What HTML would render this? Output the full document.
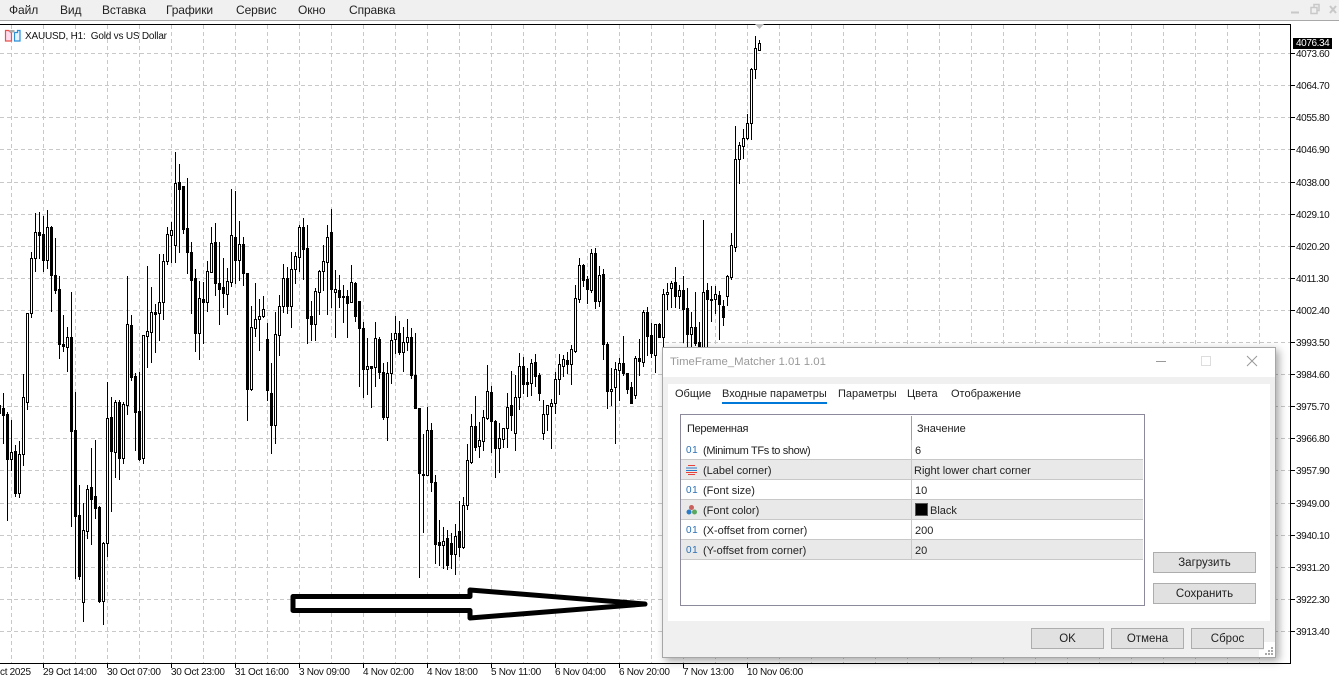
<!DOCTYPE html>
<html><head><meta charset="utf-8"><style>
html,body{margin:0;padding:0;background:#fff}
#p{position:relative;width:1339px;height:682px;overflow:hidden;background:#fff;font-family:"Liberation Sans",sans-serif;color:#111}
#p span,#p div{position:absolute;white-space:pre}
.m{font-size:12px;top:3px;color:#222;letter-spacing:-.1px}
.a{font-size:10px;letter-spacing:-.4px;left:1296px;color:#111;line-height:12px;margin-top:1.500px}
.t{font-size:10px;letter-spacing:-.3px;top:667px;color:#111;line-height:12px}
.d{font-size:11px;color:#222;line-height:14px;margin-top:1px}
.b{background:#e1e1e1;border:1px solid #adadad;box-sizing:border-box;text-align:center;font-size:11.5px;line-height:20px;color:#222}
.r{left:681px;width:462px;height:19px;border-bottom:1px solid #c8c8c8}
.o{font-size:10px;color:#2b6fb5;left:686px;letter-spacing:.6px;line-height:12px;margin-top:1px}
</style></head><body><div id="p">
<div style="left:0;top:0;width:1339px;height:20px;background:#f0f0f0"></div>
<div style="left:0;top:20px;width:1339px;height:1px;background:#a8a8a8"></div>
<span class="m" style="left:9px">Файл</span><span class="m" style="left:60px">Вид</span><span class="m" style="left:102px">Вставка</span><span class="m" style="left:166px">Графики</span><span class="m" style="left:236px">Сервис</span><span class="m" style="left:298px">Окно</span><span class="m" style="left:349px">Справка</span>
<svg style="position:absolute;left:1285px;top:0" width="54" height="20" fill="none" stroke="#c8c8c8"><path d="M6 12.500H14" stroke-width="2"/><path d="M26 7.500h6v6h-6zM29 7V4.500h5v6h-2" stroke-width="1.500"/><path d="M45 6l6 7M51 6l-6 7" stroke-width="2"/></svg>
<svg id="c" style="position:absolute;left:0;top:0" width="1339" height="682"></svg>
<svg style="position:absolute;left:4px;top:29px" width="18" height="13" fill="none"><path d="M1.500 1.500h3l3 2.500v8h-6z" stroke="#e8524a" stroke-width="1.200" fill="#fde"/><path d="M10.500 3.500h3v-2h2.500v10.500h-5.500z" stroke="#2b8fd8" stroke-width="1.200" fill="#e6f4ff"/><rect x="5.500" y="1" width="5" height="2.500" fill="#aaa"/></svg>
<span style="left:25px;top:31px;font-size:10px;line-height:12px;letter-spacing:-.2px;color:#111">XAUUSD, H1:  Gold vs US Dollar</span>
<span class="a" style="top:47px">4073.60</span><span class="a" style="top:79px">4064.70</span><span class="a" style="top:111px">4055.80</span><span class="a" style="top:143px">4046.90</span><span class="a" style="top:176px">4038.00</span><span class="a" style="top:208px">4029.10</span><span class="a" style="top:240px">4020.20</span><span class="a" style="top:272px">4011.30</span><span class="a" style="top:304px">4002.40</span><span class="a" style="top:336px">3993.50</span><span class="a" style="top:368px">3984.60</span><span class="a" style="top:400px">3975.70</span><span class="a" style="top:432px">3966.80</span><span class="a" style="top:464px">3957.90</span><span class="a" style="top:497px">3949.00</span><span class="a" style="top:529px">3940.10</span><span class="a" style="top:561px">3931.20</span><span class="a" style="top:593px">3922.30</span><span class="a" style="top:625px">3913.40</span>
<div style="left:1293px;top:38px;width:39px;height:11px;background:#000"></div>
<span class="a" style="top:36.500px;color:#fff">4076.34</span>
<span class="t" style="left:0">ct 2025</span><span class="t" style="left:43px">29 Oct 14:00</span><span class="t" style="left:107px">30 Oct 07:00</span><span class="t" style="left:171px">30 Oct 23:00</span><span class="t" style="left:235px">31 Oct 16:00</span><span class="t" style="left:299px">3 Nov 09:00</span><span class="t" style="left:363px">4 Nov 02:00</span><span class="t" style="left:427px">4 Nov 18:00</span><span class="t" style="left:491px">5 Nov 11:00</span><span class="t" style="left:555px">6 Nov 04:00</span><span class="t" style="left:619px">6 Nov 20:00</span><span class="t" style="left:683px">7 Nov 13:00</span><span class="t" style="left:747px">10 Nov 06:00</span>

<div style="left:662px;top:347px;width:614px;height:311px;background:#f0f0f0;box-sizing:border-box;border:1px solid #a6a6a6;box-shadow:3px 3px 8px rgba(0,0,0,.35)"></div>
<div style="left:663px;top:348px;width:612px;height:29px;background:#fff"></div>
<div style="left:668px;top:384px;width:602px;height:237px;background:#fff"></div>
<span style="left:670px;top:355px;font-size:11.400px;line-height:14px;color:#999">TimeFrame_Matcher 1.01 1.01</span>
<svg style="position:absolute;left:1150px;top:350px" width="115" height="22" fill="none"><path d="M6 11.500H16" stroke="#999"/><path d="M51.500 6.500h9v9h-9z" stroke="#ddd"/><path d="M97 6l10 10M107 6l-10 10" stroke="#999"/></svg>
<span class="d" style="left:675px;top:386px">Общие</span><span class="d" style="left:722px;top:386px">Входные параметры</span><span class="d" style="left:838px;top:386px">Параметры</span><span class="d" style="left:907px;top:386px">Цвета</span><span class="d" style="left:951px;top:386px">Отображение</span>
<div style="left:722px;top:402px;width:105px;height:2px;background:#0078d7"></div>

<div style="left:680px;top:414px;width:465px;height:192px;box-sizing:border-box;border:1px solid #8a8a9c;background:#fff"></div>
<div class="r" style="top:440px"></div>
<div class="r" style="top:460px;background:#e9e9e9"></div>
<div class="r" style="top:480px"></div>
<div class="r" style="top:500px;background:#e9e9e9"></div>
<div class="r" style="top:520px"></div>
<div class="r" style="top:540px;background:#e9e9e9"></div>
<div style="left:911px;top:416px;width:1px;height:24px;background:#a0a0a0"></div>
<div style="left:911px;top:440px;width:1px;height:120px;background:#c8c8c8"></div>
<span class="d" style="left:687px;top:421px;letter-spacing:-.3px">Переменная</span><span class="d" style="left:917px;top:421px">Значение</span>

<span class="o" style="top:444px">01</span><span class="d" style="left:703px;top:443px;letter-spacing:-.35px">(Minimum TFs to show)</span><span class="d" style="left:915px;top:443px">6</span>
<svg style="position:absolute;left:685px;top:464px" width="13" height="12"><path d="M3 1.500h7M3 10.500h7" stroke="#e8413c"/><path d="M1 4h11M1 6.500h11" stroke="#2b7cc8"/><path d="M1 8.500h11" stroke="#e8413c"/></svg>
<span class="d" style="left:703px;top:463px">(Label corner)</span><span class="d" style="left:914px;top:463px">Right lower chart corner</span>
<span class="o" style="top:484px">01</span><span class="d" style="left:703px;top:483px">(Font size)</span><span class="d" style="left:915px;top:483px">10</span>
<svg style="position:absolute;left:686px;top:504px" width="12" height="12"><circle cx="5.500" cy="3.500" r="2.500" fill="#c9605c"/><circle cx="3" cy="8" r="2.500" fill="#2b7cc8"/><circle cx="8.500" cy="8" r="2.500" fill="#5aa860"/></svg>
<span class="d" style="left:703px;top:503px">(Font color)</span>
<div style="left:915px;top:503px;width:13px;height:13px;background:#000;box-sizing:border-box;border:1px solid #555"></div>
<span class="d" style="left:930px;top:503px">Black</span>
<span class="o" style="top:524px">01</span><span class="d" style="left:703px;top:523px">(X-offset from corner)</span><span class="d" style="left:915px;top:523px">200</span>
<span class="o" style="top:544px">01</span><span class="d" style="left:703px;top:543px">(Y-offset from corner)</span><span class="d" style="left:915px;top:543px">20</span>

<div class="b" style="left:1153px;top:552px;width:103px;height:21px">Загрузить</div>
<div class="b" style="left:1153px;top:583px;width:103px;height:21px">Сохранить</div>
<div class="b" style="left:1031px;top:628px;width:73px;height:21px">OK</div>
<div class="b" style="left:1111px;top:628px;width:73px;height:21px">Отмена</div>
<div class="b" style="left:1191px;top:628px;width:73px;height:21px">Сброс</div>
<div style="left:1264px;top:642px;width:11px;height:15px;background:#fff"></div>
<div style="left:1259px;top:650px;width:16px;height:7px;background:#fff"></div>
<svg style="position:absolute;left:1264px;top:646px" width="10" height="10" fill="#aaa"><rect x="7" y="1" width="2" height="2"/><rect x="4" y="4" width="2" height="2"/><rect x="7" y="4" width="2" height="2"/><rect x="1" y="7" width="2" height="2"/><rect x="4" y="7" width="2" height="2"/><rect x="7" y="7" width="2" height="2"/></svg>
</div>
<script>
var D=[[-1,400,405,413,440,1],[3,393,408,415,443,1],[7,412,414,459,520,1],[11,420,452,459,470,0],[15,445,451,493,496,1],[19,441,454,493,497,0],[23,374,397,454,465,0],[27,313,313,402,409,0],[31,252,258,313,317,0],[35,213,232,258,271,0],[39,212,232,235,258,1],[43,216,234,260,271,1],[47,210,227,260,268,0],[51,226,227,275,311,1],[55,238,275,290,293,1],[59,276,289,344,358,1],[63,315,344,346,351,1],[67,327,337,347,371,0],[71,292,337,431,526,1],[75,392,430,516,578,1],[79,485,515,576,579,1],[83,503,530,602,621,0],[87,485,489,531,538,0],[91,448,487,499,544,1],[95,440,496,508,518,1],[99,506,507,601,602,1],[103,542,543,601,624,0],[107,382,418,543,556,0],[111,397,417,451,511,1],[115,400,402,452,477,0],[119,400,402,458,479,1],[123,402,404,458,463,0],[127,276,324,405,414,0],[131,315,325,377,380,1],[135,373,376,412,450,1],[139,372,411,459,460,1],[143,335,335,458,463,0],[147,266,331,336,367,0],[151,287,312,332,362,0],[155,304,312,314,352,1],[159,254,302,313,340,0],[163,254,261,302,319,0],[167,227,234,261,264,0],[171,222,230,235,262,0],[175,152,183,245,262,0],[179,164,182,189,252,1],[183,186,186,229,233,1],[187,178,228,252,273,1],[191,242,252,280,313,1],[195,269,278,333,351,1],[199,281,298,333,359,0],[203,282,299,302,343,1],[207,261,271,302,311,0],[211,227,243,272,272,0],[215,223,242,283,295,1],[219,242,283,289,324,1],[223,258,287,293,307,1],[227,268,281,294,314,0],[231,189,235,282,286,0],[235,191,237,260,283,1],[239,221,244,260,280,0],[243,237,244,273,285,1],[247,273,273,389,420,1],[251,306,327,389,390,0],[255,283,319,328,336,0],[259,299,316,319,350,0],[263,296,309,316,317,0],[267,323,339,390,400,1],[271,363,393,425,453,1],[275,312,334,425,443,0],[279,295,306,335,355,0],[283,264,278,306,312,0],[287,267,278,306,313,1],[291,252,269,306,327,0],[295,252,256,269,283,0],[299,225,227,257,271,0],[303,218,227,249,279,1],[307,225,248,318,343,1],[311,301,316,324,340,1],[315,288,291,324,340,0],[319,270,271,292,314,0],[323,245,261,271,290,0],[327,225,237,262,314,0],[331,209,232,289,307,1],[335,270,289,292,337,0],[339,275,290,297,307,1],[343,285,296,297,322,1],[347,290,296,303,337,1],[351,265,282,302,302,0],[355,282,283,316,321,1],[359,301,301,328,386,1],[363,322,328,369,397,1],[367,338,366,369,394,0],[371,366,366,368,407,1],[375,322,338,367,386,0],[379,337,339,372,378,1],[383,363,372,417,419,1],[387,362,373,417,440,0],[391,333,340,373,383,0],[395,316,333,339,353,0],[399,321,333,352,354,1],[403,327,342,352,371,0],[407,319,337,342,350,0],[411,328,337,375,378,1],[415,333,375,408,408,1],[419,408,408,473,577,1],[423,434,474,475,532,1],[427,407,430,475,475,0],[431,423,430,482,491,1],[435,475,482,544,563,1],[439,520,542,545,565,1],[443,527,541,545,568,0],[447,530,538,565,569,1],[451,533,543,554,568,1],[455,524,536,554,574,0],[459,501,531,547,556,1],[463,497,505,547,548,0],[467,444,460,505,509,0],[471,414,426,462,463,0],[475,396,426,447,450,1],[479,422,440,446,457,0],[483,410,417,441,450,0],[487,365,391,418,419,0],[491,386,392,421,452,1],[495,420,421,448,477,1],[499,423,438,448,472,0],[503,428,428,439,447,0],[507,393,407,428,447,0],[511,371,405,415,430,1],[515,375,397,433,450,0],[519,353,366,397,409,0],[523,357,366,384,393,1],[527,368,382,384,396,1],[531,359,363,383,395,0],[535,354,362,376,386,1],[539,373,375,393,400,1],[543,400,414,433,439,0],[547,405,405,414,430,0],[551,399,403,406,448,0],[555,372,379,403,413,0],[559,354,364,379,394,0],[563,355,359,366,376,0],[567,352,360,364,373,1],[571,345,349,364,384,0],[575,285,298,351,352,0],[579,258,265,299,302,0],[583,264,265,280,286,1],[587,276,279,289,303,1],[591,249,253,290,292,0],[595,248,253,301,308,1],[599,266,275,301,306,0],[603,269,274,344,359,1],[607,342,344,391,408,1],[611,368,389,391,405,0],[615,362,369,387,443,0],[619,358,363,370,400,0],[623,336,363,373,375,1],[627,373,373,389,393,1],[631,382,387,403,403,1],[635,356,358,395,398,0],[639,339,358,361,375,1],[643,310,312,362,366,0],[647,307,312,336,355,1],[651,323,335,353,357,1],[655,324,324,355,372,0],[659,323,324,337,337,1],[663,289,294,337,347,0],[667,283,292,294,309,0],[671,281,283,288,307,0],[675,267,282,296,307,1],[679,285,290,296,308,0],[683,276,290,309,342,1],[687,288,308,334,350,1],[691,312,327,334,350,0],[695,292,327,343,345,1],[699,322,342,347,350,1],[703,220,292,347,350,0],[707,283,290,299,350,1],[711,286,299,300,321,1],[715,286,294,299,313,0],[719,291,295,304,339,1],[723,300,306,317,325,1],[727,275,276,296,305,0],[731,233,245,277,279,0],[735,126,159,247,251,0],[739,142,145,159,183,0],[743,129,138,146,158,0],[747,114,123,138,139,0],[751,68,69,123,139,0],[755,36,48,69,78,0],[759,40,43,50,50,0]];
var s='',i,y=[53,85,117,149,182,214,246,278,310,342,374,406,438,470,503,535,567,599,631];
var g='',tk='';
for(i=0;i<40;i++){var x=11+32*i;g+='M'+(x+.5)+' 25V663'}
for(i=0;i<y.length;i++){g+='M0 '+(y[i]+.5)+'H1290';tk+='M1291 '+(y[i]+.5)+'h4'}
for(i=0;i<12;i++){tk+='M'+(43+64*i+.5)+' 664v4'}
s+='<path d="'+g+'" stroke="#c8c8c8" stroke-dasharray="4 3" fill="none"/>';
var w='',h='',f='';
D.forEach(function(c){var a=c[0]+.5;w+='M'+a+' '+c[1]+'V'+(c[4]+1);
var p='M'+(c[0]-1+.5)+' '+(c[2]+.5)+'h2v'+Math.max(c[3]-c[2],1)+'h-2z';if(c[5])f+=p;else h+=p});
s+='<path d="'+w+'" stroke="#000" fill="none"/><path d="'+h+'" stroke="#000" fill="#fff"/><path d="'+f+'" stroke="#000" fill="#000"/>';
s+='<path d="M0 24.500H1291M1290.500 24V664M0 663.500H1291" stroke="#000" fill="none"/>';
s+='<path d="'+tk+'" stroke="#000" fill="none"/>';
s+='<path d="M755 24h9l-4.500 5z" fill="#bdbdbd"/>';
s+='<path d="M293 596.500H470V590L645 604 470 618V610.500H293Z" fill="#fff" stroke="#000" stroke-width="5" stroke-linejoin="round"/>';
document.getElementById('c').innerHTML=s;
</script>
</body></html>
